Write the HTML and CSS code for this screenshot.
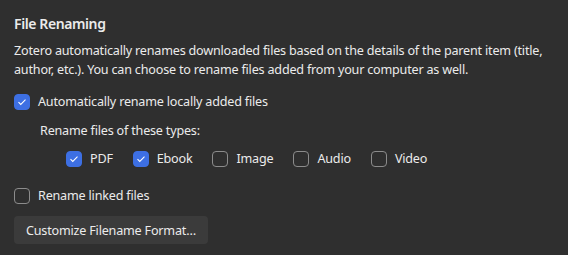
FILE: index.html
```html
<!DOCTYPE html>
<html lang="en">
<head>
  <meta charset="UTF-8" />
  <title>File Renaming</title>
  <link rel="stylesheet" href="styles.css">
</head>
<body>
  <section class="pref-group">
    <h2>File Renaming</h2>
    <p class="desc">Zotero automatically renames downloaded files based on the details of the parent item (title, author, etc.). You can choose to rename files added from your computer as well.</p>

    <label class="check main-check">
      <input type="checkbox" checked>
      <span class="box"></span>
      Automatically rename locally added files
    </label>

    <div class="types">
      <div class="types-title">Rename files of these types:</div>
      <div class="types-row">
        <label class="check"><input type="checkbox" checked><span class="box"></span>PDF</label>
        <label class="check"><input type="checkbox" checked><span class="box"></span>Ebook</label>
        <label class="check"><input type="checkbox"><span class="box"></span>Image</label>
        <label class="check"><input type="checkbox"><span class="box"></span>Audio</label>
        <label class="check"><input type="checkbox"><span class="box"></span>Video</label>
      </div>
    </div>

    <label class="check linked-check">
      <input type="checkbox">
      <span class="box"></span>
      Rename linked files
    </label>

    <button class="btn">Customize Filename Format…</button>
  </section>
</body>
</html>
```

FILE: styles.css
```css
body {
  margin: 0;
  padding: 0;
  background-color: #2f2f2f;
  color: #ebebeb;
  font-family: 'Noto Sans', 'Open Sans', sans-serif;
  font-size: 12.6px;
  letter-spacing: -0.2px;
}

.pref-group {
  padding: 13px 14px 0;
  display: flex;
  flex-direction: column;
  align-items: flex-start;
}

h2 {
  margin: 0;
  font-size: 14px;
  font-weight: 600;
  letter-spacing: -0.4px;
  line-height: 22px;
}

.desc {
  margin: 6px 0 0;
  line-height: 19px;
  width: 546px;
}

.check {
  display: flex;
  align-items: center;
  gap: 8px;
  line-height: 18px;
  cursor: pointer;
}

.check input {
  display: none;
}

.box {
  width: 14px;
  height: 14px;
  border: 1px solid #8c8c8c;
  border-radius: 4px;
  flex-shrink: 0;
}

.check input:checked + .box {
  background-color: #3d6fe3;
  border-color: #3d6fe3;
  background-image: url("data:image/svg+xml,%3Csvg xmlns='http://www.w3.org/2000/svg' viewBox='0 0 16 16'%3E%3Cpath d='M4 8.2l2.6 2.6L12 5.4' fill='none' stroke='white' stroke-width='1.2'/%3E%3C/svg%3E");
  background-size: 14px 14px;
}

.main-check {
  margin-top: 14px;
}

.types {
  padding-left: 26px;
  margin-top: 11px;
}

.types-row {
  display: flex;
  gap: 0 20px;
  margin-top: 11px;
  padding-left: 26px;
}

.linked-check {
  margin-top: 19px;
}

.btn {
  margin-top: 11px;
  height: 28px;
  padding: 0 12px;
  background-color: #3b3b3b;
  color: #ebebeb;
  border: none;
  border-radius: 4px;
  font-family: inherit;
  font-size: 12.6px;
  letter-spacing: -0.2px;
}
```
